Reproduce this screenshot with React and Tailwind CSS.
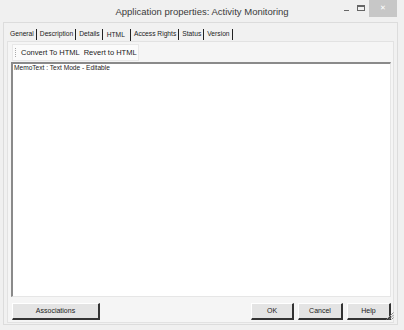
import React from 'react';

const tabs = ['General', 'Description', 'Details', 'HTML', 'Access Rights', 'Status', 'Version'];

function Btn({ children, className = '' }) {
  return (
    <div
      className={`h-[17px] flex items-center justify-center bg-[#e4e4e4] border-t border-l border-t-white border-l-white border-r-2 border-b-2 border-r-[#333] border-b-[#333] text-[7px] text-[#222] whitespace-nowrap ${className}`}
    >
      {children}
    </div>
  );
}

export default function App() {
  return (
    <div
      className="w-[404px] h-[330px] bg-[#f0f0f0] flex flex-col overflow-hidden"
      style={{ fontFamily: '"Liberation Sans", Arial, sans-serif' }}
    >
      {/* title bar */}
      <div className="h-[22px] relative flex items-center justify-center shrink-0">
        <span className="text-[9.5px] text-[#3a3a3a] mt-[2px]">
          Application properties: Activity Monitoring
        </span>
        <div className="absolute right-[7px] top-0 flex items-start">
          <div className="w-[13px] h-[16px] flex items-center justify-center">
            <div className="w-[5px] h-[1px] bg-[#666] mt-[4px]" />
          </div>
          <div className="w-[16px] h-[16px] flex items-center justify-center">
            <div className="w-[8px] h-[6px] border border-[#666] border-t-2" />
          </div>
          <div className="w-[28px] h-[17px] bg-[#c7c7c7] flex items-center justify-center text-white text-[7px]">
            ✕
          </div>
        </div>
      </div>

      {/* content */}
      <div className="h-[303px] ml-[3px] w-[395px] bg-[#f1f1f1] border border-[#dcdcdc] flex flex-col">
        {/* tabs */}
        <div className="h-[18px] flex items-end pl-[6px] text-[6.7px] text-[#222] whitespace-nowrap">
          {tabs.map((t) => (
            <div
              key={t}
              className={`flex items-center border-r border-r-[#222] ${
                t === 'HTML' ? 'h-[12px] pl-[1px] pr-[5px] mr-[3px]' : 'h-[11px] mb-[1px] pr-[2px] mr-[3px]'
              }`}
            >
              {t}
            </div>
          ))}
        </div>

        {/* page */}
        <div className="flex-1 mx-[3px] mb-[1px] bg-[#f5f5f5] border border-[#e2e2e2] flex flex-col pl-[3px] pr-[2px] pt-[2px]">
          {/* toolbar */}
          <div className="h-[17px] w-[127px] ml-[1px] bg-[#fbfbfb] border border-[#e8e8e8] flex items-center text-[7.5px] text-[#222] whitespace-nowrap">
            <div className="w-[1px] h-[9px] ml-[2px] mr-[5px] border-l border-dotted border-[#aaa]" />
            <span className="mr-[4px]">Convert To HTML</span>
            <span>Revert to HTML</span>
          </div>

          {/* memo */}
          <div className="h-[235px] mt-[1px] bg-white border-t-2 border-l-2 border-t-[#8a8a8a] border-l-[#8a8a8a] border-r border-b border-r-[#e6e6e6] border-b-[#e6e6e6] pl-[1px] pt-[1px]">
            <div className="text-[6.6px] text-[#222] leading-none whitespace-nowrap">
              MemoText : Text Mode - Editable
            </div>
          </div>

          {/* buttons */}
          <div className="flex-1 flex items-start pt-[6px] relative">
            <Btn className="w-[88px] ml-[1px]">Associations</Btn>
            <div className="flex-1" />
            <Btn className="w-[43px] mr-[4px]">OK</Btn>
            <Btn className="w-[45px] mr-[4px]">Cancel</Btn>
            <Btn className="w-[44px]">Help</Btn>
            <svg className="absolute right-[-3px] bottom-[2px]" width="9" height="9" viewBox="0 0 9 9">
              <path d="M8.5 1.5 L1.5 8.5 M8.5 4 L4 8.5 M8.5 6.5 L6.5 8.5" stroke="#888" strokeWidth="1" />
            </svg>
          </div>
        </div>
      </div>
    </div>
  );
}
